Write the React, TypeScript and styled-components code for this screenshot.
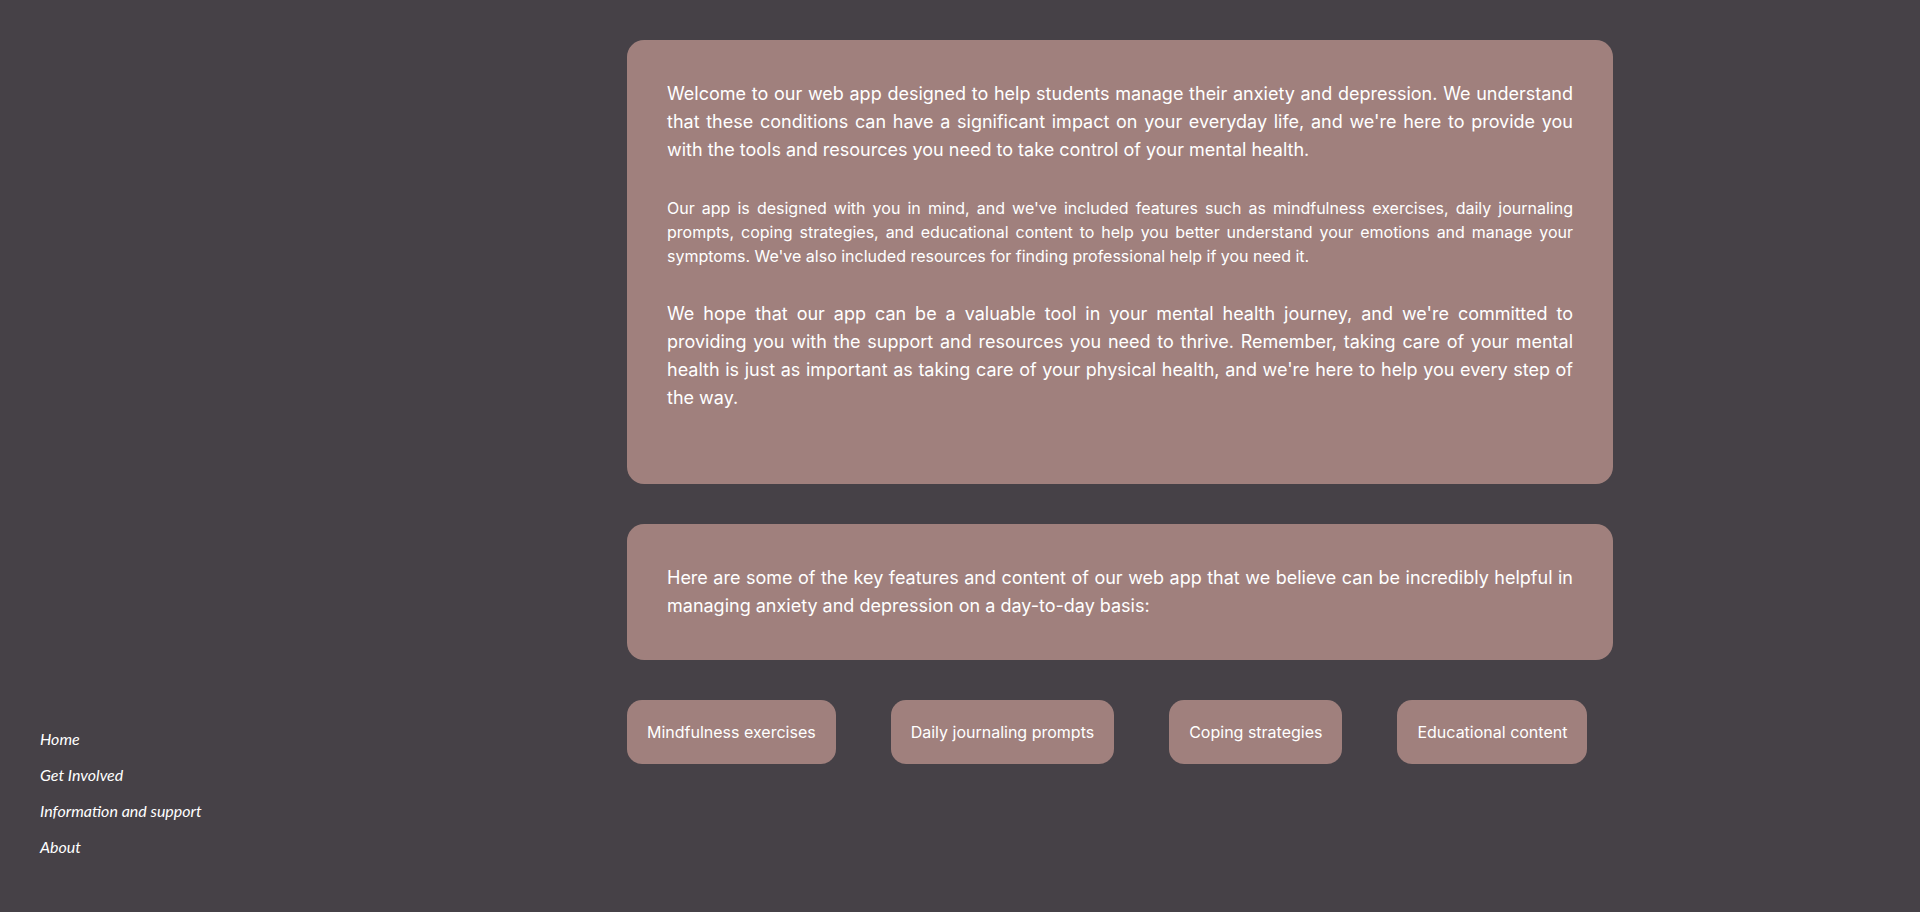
import React from 'react';
import styled, { createGlobalStyle } from 'styled-components';

const GlobalStyle = createGlobalStyle`
  * {
    box-sizing: border-box;
  }
  html,
  body {
    margin: 0;
    padding: 0;
    background: #464147;
  }
  body {
    font-family: Inter, 'Noto Sans', sans-serif;
    color: #ffffff;
  }
`;

const navLinks = ['Home', 'Get Involved', 'Information and support', 'About'];

const features = [
  'Mindfulness exercises',
  'Daily journaling prompts',
  'Coping strategies',
  'Educational content',
];

export default function App() {
  return (
    <>
      <GlobalStyle />
      <Page>
        <Sidebar>
          <Nav>
            {navLinks.map((link) => (
              <NavLink key={link} href='#'>
                {link}
              </NavLink>
            ))}
          </Nav>
        </Sidebar>
        <Main>
          <Card $padBottom={72}>
            <Text>
              Welcome to our web app designed to help students manage their anxiety and
              depression. We understand that these conditions can have a significant impact
              on your everyday life, and we're here to provide you with the tools and
              resources you need to take control of your mental health.
            </Text>
            <Text $small>
              Our app is designed with you in mind, and we've included features such as
              mindfulness exercises, daily journaling prompts, coping strategies, and
              educational content to help you better understand your emotions and manage
              your symptoms. We've also included resources for finding professional help if
              you need it.
            </Text>
            <Text>
              We hope that our app can be a valuable tool in your mental health journey, and
              we're committed to providing you with the support and resources you need to
              thrive. Remember, taking care of your mental health is just as important as
              taking care of your physical health, and we're here to help you every step of
              the way.
            </Text>
          </Card>
          <Card $padBottom={40}>
            <Text>
              Here are some of the key features and content of our web app that we believe
              can be incredibly helpful in managing anxiety and depression on a day-to-day
              basis:
            </Text>
          </Card>
          <Features>
            {features.map((f) => (
              <FeatureButton key={f}>{f}</FeatureButton>
            ))}
          </Features>
        </Main>
      </Page>
    </>
  );
}

const Page = styled.div`
  display: grid;
  grid-template-columns: 627px 986px;
  min-height: 912px;
`;

const Sidebar = styled.aside`
  display: flex;
  flex-direction: column;
  justify-content: flex-end;
  padding: 0 0 55px 40px;
`;

const Nav = styled.nav`
  display: flex;
  flex-direction: column;
  gap: 16px;
`;

const NavLink = styled.a`
  font-family: Lato, 'Open Sans', sans-serif;
  font-style: italic;
  font-size: 16px;
  line-height: 20px;
  color: #ffffff;
  text-decoration: none;
  &:hover {
    text-decoration: underline;
  }
`;

const Main = styled.main`
  display: flex;
  flex-direction: column;
  gap: 40px;
  padding-top: 40px;
`;

const Card = styled.section<{ $padBottom: number }>`
  display: flex;
  flex-direction: column;
  gap: 32px;
  background: #a0807d;
  border-radius: 17px;
  padding: 40px 40px ${(p) => p.$padBottom}px;
`;

const Text = styled.p<{ $small?: boolean }>`
  margin: 0;
  text-align: justify;
  font-size: ${(p) => (p.$small ? '16px' : '18px')};
  line-height: ${(p) => (p.$small ? '24px' : '28px')};
`;

const Features = styled.div`
  display: flex;
  gap: 55px;
`;

const FeatureButton = styled.button`
  font-family: Inter, 'Noto Sans', sans-serif;
  font-size: 16px;
  line-height: 24px;
  color: #ffffff;
  background: #a0807d;
  border: none;
  border-radius: 15px;
  padding: 20px;
  cursor: pointer;
`;
